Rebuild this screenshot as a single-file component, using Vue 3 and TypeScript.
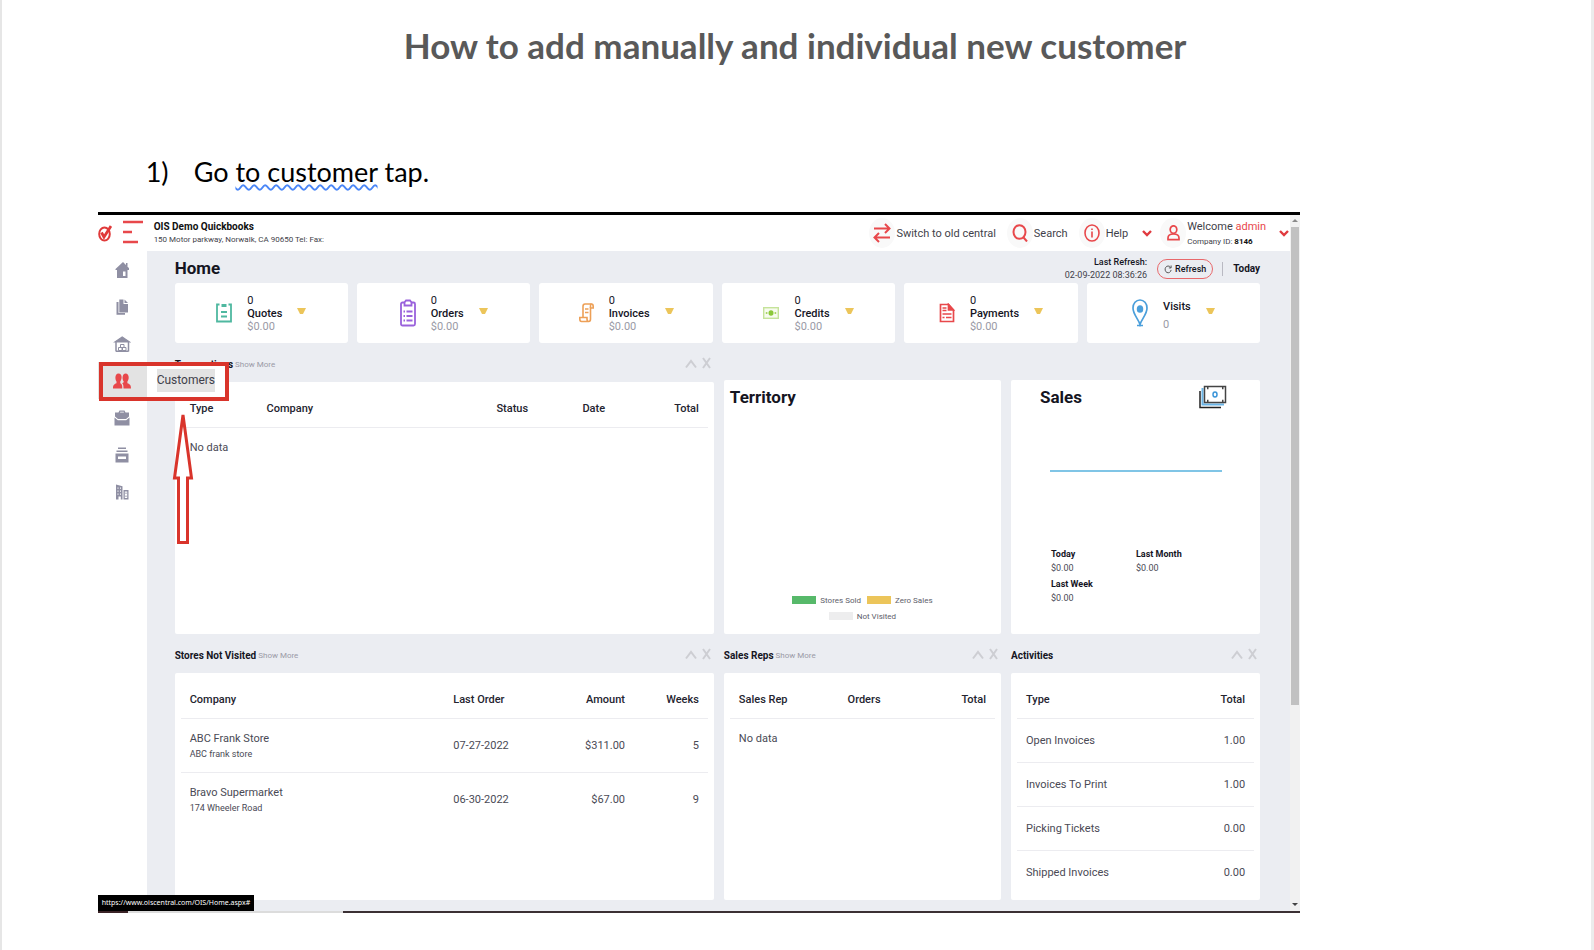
<script setup lang="ts">
interface Card { name: string; count: string; amount: string; icon: string }
interface NavItem { name: string; icon: string }

const nav: NavItem[] = [
  { name: 'Home', icon: 'home' },
  { name: 'Documents', icon: 'docs' },
  { name: 'Warehouse', icon: 'warehouse' },
  { name: 'Customers', icon: 'people' },
  { name: 'Vendors', icon: 'case' },
  { name: 'Inventory', icon: 'drawer' },
  { name: 'Company', icon: 'building' },
]

const cards: Card[] = [
  { name: 'Quotes', count: '0', amount: '$0.00', icon: 'quotes' },
  { name: 'Orders', count: '0', amount: '$0.00', icon: 'orders' },
  { name: 'Invoices', count: '0', amount: '$0.00', icon: 'invoices' },
  { name: 'Credits', count: '0', amount: '$0.00', icon: 'credits' },
  { name: 'Payments', count: '0', amount: '$0.00', icon: 'payments' },
  { name: 'Visits', count: '', amount: '0', icon: 'visits' },
]

const stores = [
  { name: 'ABC Frank Store', sub: 'ABC frank store', date: '07-27-2022', amount: '$311.00', weeks: 5 },
  { name: 'Bravo Supermarket', sub: '174 Wheeler Road', date: '06-30-2022', amount: '$67.00', weeks: 9 },
]

const activities = [
  { type: 'Open Invoices', total: '1.00' },
  { type: 'Invoices To Print', total: '1.00' },
  { type: 'Picking Tickets', total: '0.00' },
  { type: 'Shipped Invoices', total: '0.00' },
]
</script>

<template>
  <div class="page">
    <h1>How to add manually and individual new customer</h1>
    <p class="step"><span class="num">1)</span><span>Go <span class="wavy">to customer</span> tap.</span></p>

    <div class="shot">
      <header class="topbar">
        <svg class="logo" viewBox="0 0 14 18" width="14" height="18" fill="none" stroke="#e03a3a">
          <ellipse cx="6.5" cy="10" rx="5.3" ry="6.5" stroke-width="2" />
          <path d="M3.5 8.500l2.500 4.500L13 2" stroke-width="2.800" />
        </svg>
        <button class="burger" aria-label="Menu">
          <svg viewBox="0 0 22 24" width="22" height="24" fill="none" stroke="#e8484b" stroke-width="2.400">
            <path d="M1 2h20M1 12h9M1 22h15" />
          </svg>
        </button>
        <div class="company">
          <strong>OIS Demo Quickbooks</strong>
          <span>150 Motor parkway, Norwalk, CA 90650 Tel: Fax:</span>
        </div>
        <div class="actions">
          <button class="action">
            <span class="disc"><svg viewBox="0 0 18 20" width="18" height="20" fill="none" stroke="#e8484b" stroke-width="2"><path d="M1 5.500h15M12 1l4.500 4.500L12 10M17 14.500H2M6 10l-4.500 4.500L6 19" /></svg></span>
            Switch to old central
          </button>
          <button class="action">
            <span class="disc"><svg viewBox="0 0 16 18" width="16" height="18" fill="none" stroke="#e8484b" stroke-width="2"><ellipse cx="7.500" cy="8" rx="6" ry="6.800" /><path d="M11.500 13.500l3.500 4" /></svg></span>
            Search
          </button>
          <button class="action">
            <span class="disc"><svg viewBox="0 0 16 18" width="16" height="18" fill="none" stroke="#e8484b" stroke-width="1.600"><ellipse cx="8" cy="9" rx="7" ry="8" /><path d="M8 7.500v6M8 4.500v1.600" /></svg></span>
            Help
          </button>
          <svg class="chev help-chev" viewBox="0 0 10 7" width="10" height="7" fill="none" stroke="#e03a3f" stroke-width="2.400"><path d="M1 1l4 4 4-4" /></svg>
          <span class="disc"><svg viewBox="0 0 13 16" width="13" height="16" fill="none" stroke="#e8484b" stroke-width="1.700"><ellipse cx="6.500" cy="4.600" rx="3.300" ry="3.800" /><path d="M1 14.700v-1.700c0-2.700 2-4 5.500-4s5.500 1.300 5.500 4v1.700z" /></svg></span>
          <div class="user">
            <span>Welcome <a href="#">admin</a></span>
            <small>Company ID: <b>8146</b></small>
          </div>
          <svg class="chev" viewBox="0 0 10 7" width="10" height="7" fill="none" stroke="#e03a3f" stroke-width="2.400"><path d="M1 1l4 4 4-4" /></svg>
        </div>
      </header>

      <nav class="side">
        <a v-for="item in nav" :key="item.name" href="#" :aria-label="item.name" :class="{ active: item.icon === 'people' }">
          <svg viewBox="0 0 18 18" width="18" height="18">
            <g v-if="item.icon === 'home'"><path fill-rule="evenodd" d="M10 1L2.500 8V9h1.500v8h10.500V9H16V7l-1.500-1.200V2h-1.500v2zM10 10.500h2.500V15H10z" /></g>
            <g v-else-if="item.icon === 'docs'"><path d="M3.500 4h2V15h6.500v1.800H3.500z" /><path d="M6.300 1.500h4.200v4.500H15V14.500H6.300z" /><path d="M11.500 1.500L15 5h-3.500z" /></g>
            <g v-else-if="item.icon === 'warehouse'" fill="none" stroke="#8f8fa3" stroke-width="1.200"><path d="M3 16.500V7M15.500 16.500V7M3 16.200h12.500" stroke-width="1.500" /><path d="M9.200 2L16.500 7H2z" fill="#8f8fa3" /><path d="M7.500 9.500h3.500v3H7.500zM5.500 12.500h3.500v3H5.500zM9.500 12.500H13v3H9.500z" stroke-width="1" /></g>
            <g v-else-if="item.icon === 'people'"><path d="M5.500 1.500c2.200 0 3.300 1.700 3.100 4-.1 1.900-.7 3-1.300 3.900v1.900c1.500.9 2 1.700 2 5.200H0c0-3.500 1-4.200 3.500-5.200V9.400C2.800 8.500 2.400 7.300 2.400 5.500c0-2.300 1-4 3.100-4z" /><path d="M12.500 1.500c2.200 0 3.200 1.700 3.200 4 0 1.900-.6 3-1.300 3.900v1.900c2.600 1 3.600 1.700 3.600 5.200h-7.500c0-3-.3-4.200-1.300-5.200l1.500-1V9.400C9.500 8 9.300 5.500 9.800 4c.4-1.600 1.300-2.500 2.700-2.500z" /></g>
            <g v-else-if="item.icon === 'case'"><path fill-rule="evenodd" d="M5.500 3.500L6.500 1.500h5l1 2h3.500V7.500l-3 2.500h-8L2 7.500V3.500zM7 3.500h4L10.700 2.700H7.300z" /><path d="M1.500 8.500L4.800 11.300H13.200L16.500 8.500V16.500h-15z" /></g>
            <g v-else-if="item.icon === 'drawer'"><path d="M5 1.500h8v1.400H5zM3.500 4.500h11v1.400h-11zM2.500 7.500h13V16.500h-13zM5 10.500v2.500h8v-2.500z" fill-rule="evenodd" /></g>
            <g v-else><path fill-rule="evenodd" d="M3 1.500l6.500 1.800V16.500H7.800v-3H5.500v3H3zM4.500 4.500v1.200h1V4.500zM7 4.500v1.200h1V4.500zM4.500 7.500v1.200h1V7.500zM7 7.500v1.200h1V7.500zM4.500 10.500v1.200h1v-1.200zM7 10.500v1.200h1v-1.200zM10.500 7H15.500v9.500h-5zM11.800 8.500V15h2.400V8.500z" /><path d="M12.500 9.500h1v1.500h-1zM12.500 12.500h1v1.500h-1z" /></g>
          </svg>
        </a>
      </nav>

      <main>
        <div class="title-row">
          <h2>Home</h2>
          <div class="refreshed"><b>Last Refresh:</b><span>02-09-2022 08:36:26</span></div>
          <button class="refresh">
            <svg viewBox="0 0 9 10" width="8" height="9" fill="none" stroke="#444" stroke-width="1"><path d="M7.300 2.500A3.400 3.800 0 1 0 8 5.500M8 .5v2.700H5.500" /></svg>
            Refresh
          </button>
          <span class="today">Today</span>
        </div>

        <section class="cards">
          <article v-for="c in cards" :key="c.name" class="card">
            <svg v-if="c.icon === 'quotes'" viewBox="0 0 16 20" width="16" height="20" fill="none" stroke="#4fb8a0" stroke-width="1.800"><path d="M3.500 1.500H1v17h14v-17h-2.500" /><path d="M5.500 2.500h5" stroke-width="3" /><path d="M5 9h6M5 13.500h6" /></svg>
            <svg v-else-if="c.icon === 'orders'" viewBox="0 0 16 28" width="16" height="28" fill="none" stroke="#9a62dc" stroke-width="1.800"><rect x="1" y="3.500" width="14" height="23" rx="1.500" /><path d="M4.500 3.500v3h7v-3L10 1.500H6z" fill="#fff" /><path d="M3.500 12.500h1.500M6.500 12.500h6M3.500 17h1.500M6.500 17h6M3.500 21.500h1.500M6.500 21.500h6" /></svg>
            <svg v-else-if="c.icon === 'invoices'" viewBox="0 0 15 20" width="15" height="20" fill="none" stroke="#eda057" stroke-width="1.600"><path d="M4 14.500V3.500c0-1.500.7-2.500 2-2.500h6.500c1 0 1.700 1 1.700 2.500v1.500H11.500V16c0 1.500-.7 2.500-1.800 2.500H2.500C1.400 18.500.8 17.500.8 16v-1.500H8V16c0 1.500.7 2.500 1.700 2.500" /><path d="M12.500 1c-.8 0-1 1-1 2.500V5M6 6h3.500M6 9.500h3.500" /></svg>
            <svg v-else-if="c.icon === 'credits'" viewBox="0 0 16 12" width="16" height="12"><rect x=".700" y=".700" width="14.600" height="10.600" fill="#f7fbef" stroke="#c5e39a" stroke-width="1.400" /><ellipse cx="8" cy="6" rx="2.500" ry="2.800" fill="#8bc83a" /><path d="M2.800 5h1.600v2H2.800zM11.600 5h1.600v2h-1.600z" fill="#a9d566" /></svg>
            <svg v-else-if="c.icon === 'payments'" viewBox="0 0 16 20" width="16" height="20" fill="none" stroke="#e8484b" stroke-width="1.700"><path d="M1.500 1.500h8l5 5.500v11.500h-13z" /><path d="M9.500 1.500v5.500h5z" fill="#e8484b" /><path d="M3.500 5h4M3.500 7.500h4M3.500 11h9M3.500 14.500h2M7 14.500h5.500" /></svg>
            <svg v-else viewBox="0 0 16 28" width="16" height="28" fill="none" stroke="#4b9fdb" stroke-width="1.700"><path d="M8 25.500C6.500 20 1 15.500 1 9c0-4.500 3-8 7-8s7 3.500 7 8c0 6.500-5.500 11-7 16.500zM5 26.500h6" /><ellipse cx="8" cy="10" rx="2.400" ry="3" fill="#4b9fdb" /></svg>
            <div class="figures" :class="{ spaced: !c.count }">
              <span v-if="c.count">{{ c.count }}</span>
              <span class="name">{{ c.name }}</span>
              <span class="muted">{{ c.amount }}</span>
            </div>
            <svg class="tri" viewBox="0 0 9 6" width="9" height="6"><path d="M0 0h9L6 6H3z" fill="#ecc55a" /></svg>
          </article>
        </section>

        <section class="panels">
          <div class="col">
            <div class="head">
              <h3>Transactions</h3><a href="#">Show More</a>
              <svg class="tools" viewBox="0 0 26 12" width="26" height="12"><path d="M1 10.500l5-6.500 5 6.500M18 1l7 10M25 1l-7 10" /></svg>
            </div>
            <div class="panel">
              <table>
                <colgroup><col class="w15"><col class="w44"><col class="w16"><col></colgroup>
                <thead><tr><th>Type</th><th>Company</th><th>Status</th><th><span>Date</span><span class="last">Total</span></th></tr></thead>
                <tbody><tr class="empty"><td colspan="4">No data</td></tr></tbody>
              </table>
            </div>
          </div>

          <div class="col upper">
            <div class="panel territory">
              <h2>Territory</h2>
              <div class="legend">
                <div><i class="green"></i>Stores Sold<i class="yellow"></i>Zero Sales</div>
                <div><i class="gray"></i>Not Visited</div>
              </div>
            </div>
          </div>

          <div class="col upper">
            <div class="panel sales">
              <div class="sales-head">
                <h2>Sales</h2>
                <svg viewBox="0 0 28 24" width="28" height="24" fill="none" stroke-width="1.500"><path d="M1 6v16.500h21" stroke="#222" /><path d="M3.500 3v16.500h21.500" stroke="#6bb6e8" stroke-width="2" /><rect x="5.500" y="1.500" width="21" height="16" fill="#fff" stroke="#444" /><path d="M8 3h1.500M23 3h1.500M8 16h1.500M23 16h1.500" stroke="#444" stroke-width="2.500" /><ellipse cx="16" cy="9.500" rx="2" ry="2.500" stroke="#3d96d8" /></svg>
              </div>
              <div class="trend"></div>
              <dl>
                <div><dt>Today</dt><dd>$0.00</dd></div>
                <div><dt>Last Month</dt><dd>$0.00</dd></div>
                <div><dt>Last Week</dt><dd>$0.00</dd></div>
              </dl>
            </div>
          </div>

          <div class="col second">
            <div class="head">
              <h3>Stores Not Visited</h3><a href="#">Show More</a>
              <svg class="tools" viewBox="0 0 26 12" width="26" height="12"><path d="M1 10.500l5-6.500 5 6.500M18 1l7 10M25 1l-7 10" /></svg>
            </div>
            <div class="panel">
              <table>
                <colgroup><col class="w50"><col class="w18"><col class="w18"><col></colgroup>
                <thead><tr><th>Company</th><th>Last Order</th><th class="r">Amount</th><th class="r">Weeks</th></tr></thead>
                <tbody>
                  <tr v-for="s in stores" :key="s.name" class="store">
                    <td>{{ s.name }}<small>{{ s.sub }}</small></td><td>{{ s.date }}</td><td class="r">{{ s.amount }}</td><td class="r">{{ s.weeks }}</td>
                  </tr>
                </tbody>
              </table>
            </div>
          </div>

          <div class="col second">
            <div class="head">
              <h3>Sales Reps</h3><a href="#">Show More</a>
              <svg class="tools" viewBox="0 0 26 12" width="26" height="12"><path d="M1 10.500l5-6.500 5 6.500M18 1l7 10M25 1l-7 10" /></svg>
            </div>
            <div class="panel">
              <table>
                <colgroup><col class="w41"><col><col></colgroup>
                <thead><tr><th>Sales Rep</th><th>Orders</th><th class="r">Total</th></tr></thead>
                <tbody><tr class="empty"><td colspan="3">No data</td></tr></tbody>
              </table>
            </div>
          </div>

          <div class="col second">
            <div class="head">
              <h3>Activities</h3>
              <svg class="tools" viewBox="0 0 26 12" width="26" height="12"><path d="M1 10.500l5-6.500 5 6.500M18 1l7 10M25 1l-7 10" /></svg>
            </div>
            <div class="panel">
              <table>
                <colgroup><col class="w50"><col></colgroup>
                <thead><tr><th>Type</th><th class="r">Total</th></tr></thead>
                <tbody><tr v-for="a in activities" :key="a.type" class="activity"><td>{{ a.type }}</td><td class="r">{{ a.total }}</td></tr></tbody>
              </table>
            </div>
          </div>
        </section>
      </main>

      <div class="scroll"><i class="up"></i><div class="thumb"></div><i class="down"></i></div>
      <div class="edge"></div>

      <div class="flyout"><span>Customers</span></div>
      <div class="frame"></div>
      <svg class="arrow" viewBox="0 0 22 134" width="22" height="134"><path d="M11 4L2.500 67H6.500V131.500H15.500V67H19.500z" fill="none" stroke="#d9342b" stroke-width="3" /></svg>
      <div class="status">https://www.oiscentral.com/OIS/Home.aspx#</div>
    </div>
  </div>
</template>

<style>
body { margin: 0; background: #fff; }
</style>

<style scoped>
* { box-sizing: border-box; }
.page { min-height: 950px; padding: 23px 18.25% 0 6%; border-left: 2px solid #e6e6e6; border-right: 3px solid #ececec; background: #fff; font-family: Roboto, "Liberation Sans", sans-serif; color: #15151f; }
h1 { margin: 0 -17.2% 0 -1.2%; text-align: center; font: 700 35px/44px Lato, sans-serif; color: #595959; }
.step { display: flex; margin: 85px 0 0 48px; height: 60px; font: 400 27px/40px Lato, sans-serif; color: #000; }
.num { width: 48px; }
.wavy { text-decoration: underline wavy #4a86f7 2px; text-decoration-skip-ink: none; text-underline-offset: 2px; }
h2, h3 { margin: 0; }
h2 { font-size: 17px; line-height: 20px; font-weight: 700; }
a { color: inherit; text-decoration: none; }
button { padding: 0; border: 0; background: none; font: inherit; color: inherit; }
svg { display: block; flex: none; }

.shot { position: relative; display: grid; grid-template-columns: 49px 1fr 10px; grid-template-rows: 36px auto 2px; border-top: 3px solid #000; }
.topbar { grid-column: 1 / 3; display: flex; align-items: center; padding-right: 1px; color: #3f3f4a; }
.burger { margin-left: 10px; margin-top: -2px; }
.company { display: flex; flex-direction: column; margin-left: 10px; font-size: 8px; line-height: 13px; white-space: nowrap; }
.company strong { font-size: 10px; line-height: 13px; color: #111; }
.actions { display: flex; align-items: center; margin-left: auto; white-space: nowrap; }
.action { display: flex; align-items: center; gap: 1px; margin-right: 11px; font-size: 11px; }
.disc { display: flex; align-items: center; justify-content: center; width: 26px; height: 30px; border-radius: 50%; background: #f9f9f9; }
.help-chev { margin: 0 8px 0 3px; }
.user { display: flex; flex-direction: column; margin: 0 13px 0 1px; font-size: 11px; line-height: 15px; padding-top: 1px; }
.user a { color: #e8484b; }
.user small { font-size: 8px; }
.user b { color: #111; }

.side { grid-column: 1; display: flex; flex-direction: column; background: #fff; }
.side a { display: flex; align-items: center; justify-content: center; height: 37px; fill: #8f8fa3; }
.side a.active { background: #e3e3e3; fill: #e8484b; }

main { background: #ebedf2; padding: 0 30px 11px 28px; min-width: 0; }
.title-row { display: flex; align-items: center; height: 32px; padding-top: 4px; }
.title-row h2 { margin-right: auto; padding-bottom: 2px; }
.refreshed { display: flex; flex-direction: column; text-align: right; font-size: 9px; line-height: 13px; color: #3f3f4a; }
.refreshed b { font-weight: 500; color: #15151f; }
.refresh { display: flex; align-items: center; justify-content: center; gap: 3px; width: 56px; height: 20px; margin: 0 9px 0 10px; border: 1px solid #e8686b; border-radius: 10px; font-size: 9px; font-weight: 500; }
.today { border-left: 1px solid #b9b9c2; padding-left: 10px; font-size: 10px; font-weight: 700; line-height: 14px; }

.cards { display: grid; grid-template-columns: repeat(6, 1fr); gap: 9px; }
.card { display: flex; align-items: center; justify-content: center; gap: 15px; height: 60px; border-radius: 3px; background: #fff; }
.figures { display: flex; flex-direction: column; font-size: 11px; line-height: 13px; }
.figures.spaced { padding-top: 6px; line-height: 18px; }
.name { font-weight: 500; }
.muted { color: #9a9aa6; }
.tri { margin-bottom: 5px; }

.panels { display: grid; grid-template-columns: 539fr 277fr 249fr; column-gap: 10px; }
.col { display: flex; flex-direction: column; min-width: 0; min-height: 291px; }
.col.second { min-height: 266px; }
.col.upper { padding-top: 37px; }
.head { display: flex; align-items: center; gap: 2px; height: 39px; padding: 3px 3px 0 0; font-size: 8px; color: #9a9aa6; }
.head h3 { font-size: 10px; font-weight: 700; color: #15151f; }
.tools { margin: 0 0 2px auto; fill: none; stroke: #cdced3; stroke-width: 2; }
.panel { flex: 1; padding: 0 6px; border-radius: 2px; background: #fff; }
table { width: 100%; table-layout: fixed; border-collapse: collapse; font-size: 11px; color: #4a4a55; }
th { height: 45px; padding: 8px 9px 0; text-align: left; font-weight: 500; color: #24242f; border-bottom: 1px solid #ececf0; }
td { padding: 2px 9px 0; line-height: 16px; }
.r { text-align: right; }
.last { float: right; }
.empty td { height: 40px; }
.store td { height: 54px; }
.store small { display: block; font-size: 9px; line-height: 15px; }
.activity td { height: 44px; }
.store + .store td, .activity + .activity td { border-top: 1px solid #ececf0; }
.w15 { width: 14.6%; } .w44 { width: 43.6%; } .w16 { width: 16.3%; }
.w50 { width: 50%; } .w18 { width: 18%; } .w41 { width: 41%; }

.territory, .sales { display: flex; flex-direction: column; padding-top: 7px; }
.legend { margin: auto 0 10px; padding-right: 6px; font-size: 8px; color: #5e5e6a; }
.legend div { display: flex; align-items: center; justify-content: center; height: 16px; }
.legend i { width: 24px; height: 8px; margin: 0 4px 0 6px; }
.green { background: #57b96a; } .yellow { background: #ecc55a; } .gray { background: #ededee; }
.sales { padding-top: 5px; }
.sales-head { display: flex; align-items: center; justify-content: space-between; padding: 0 27px 0 23px; }
.trend { height: 2px; margin: 61px 32px 0 33px; background: #80c5e6; }
dl { display: grid; grid-template-columns: 85px 1fr; row-gap: 2px; margin: 75px 0 0 34px; font-size: 9px; line-height: 14px; }
dt { font-weight: 700; } dd { margin: 0; color: #4a4a55; }

.scroll { grid-column: 3; grid-row: 1 / 3; display: flex; flex-direction: column; align-items: center; background: #f1f1f1; }
.thumb { width: 8px; height: 478px; margin-bottom: auto; background: #c1c1c1; }
.up, .down { border: 3px solid transparent; }
.up { border-bottom-color: #8a8a8a; margin: 1px 0 5px; }
.down { border-top-color: #444; margin-bottom: 2px; }
.edge { grid-column: 1 / 4; background: linear-gradient(90deg, #3a2326 0 30px, #dcdcdc 30px 245px, #3b3034 245px); }

.flyout { position: absolute; left: 49px; top: 150px; width: 80px; height: 35px; padding: 4px 10px; background: #fff; font-size: 12px; line-height: 23px; color: #3f3f4a; }
.flyout span { display: inline-block; background: #e3e3e3; }
.frame { position: absolute; left: 1px; top: 147px; width: 130px; height: 39px; border: 4px solid #d9342b; }
.arrow { position: absolute; left: 74px; top: 196px; }
.status { position: absolute; left: 0; bottom: 2px; padding: 0 4px; background: #000; color: #fff; font: 7px/16px "Noto Sans", sans-serif; }
</style>
